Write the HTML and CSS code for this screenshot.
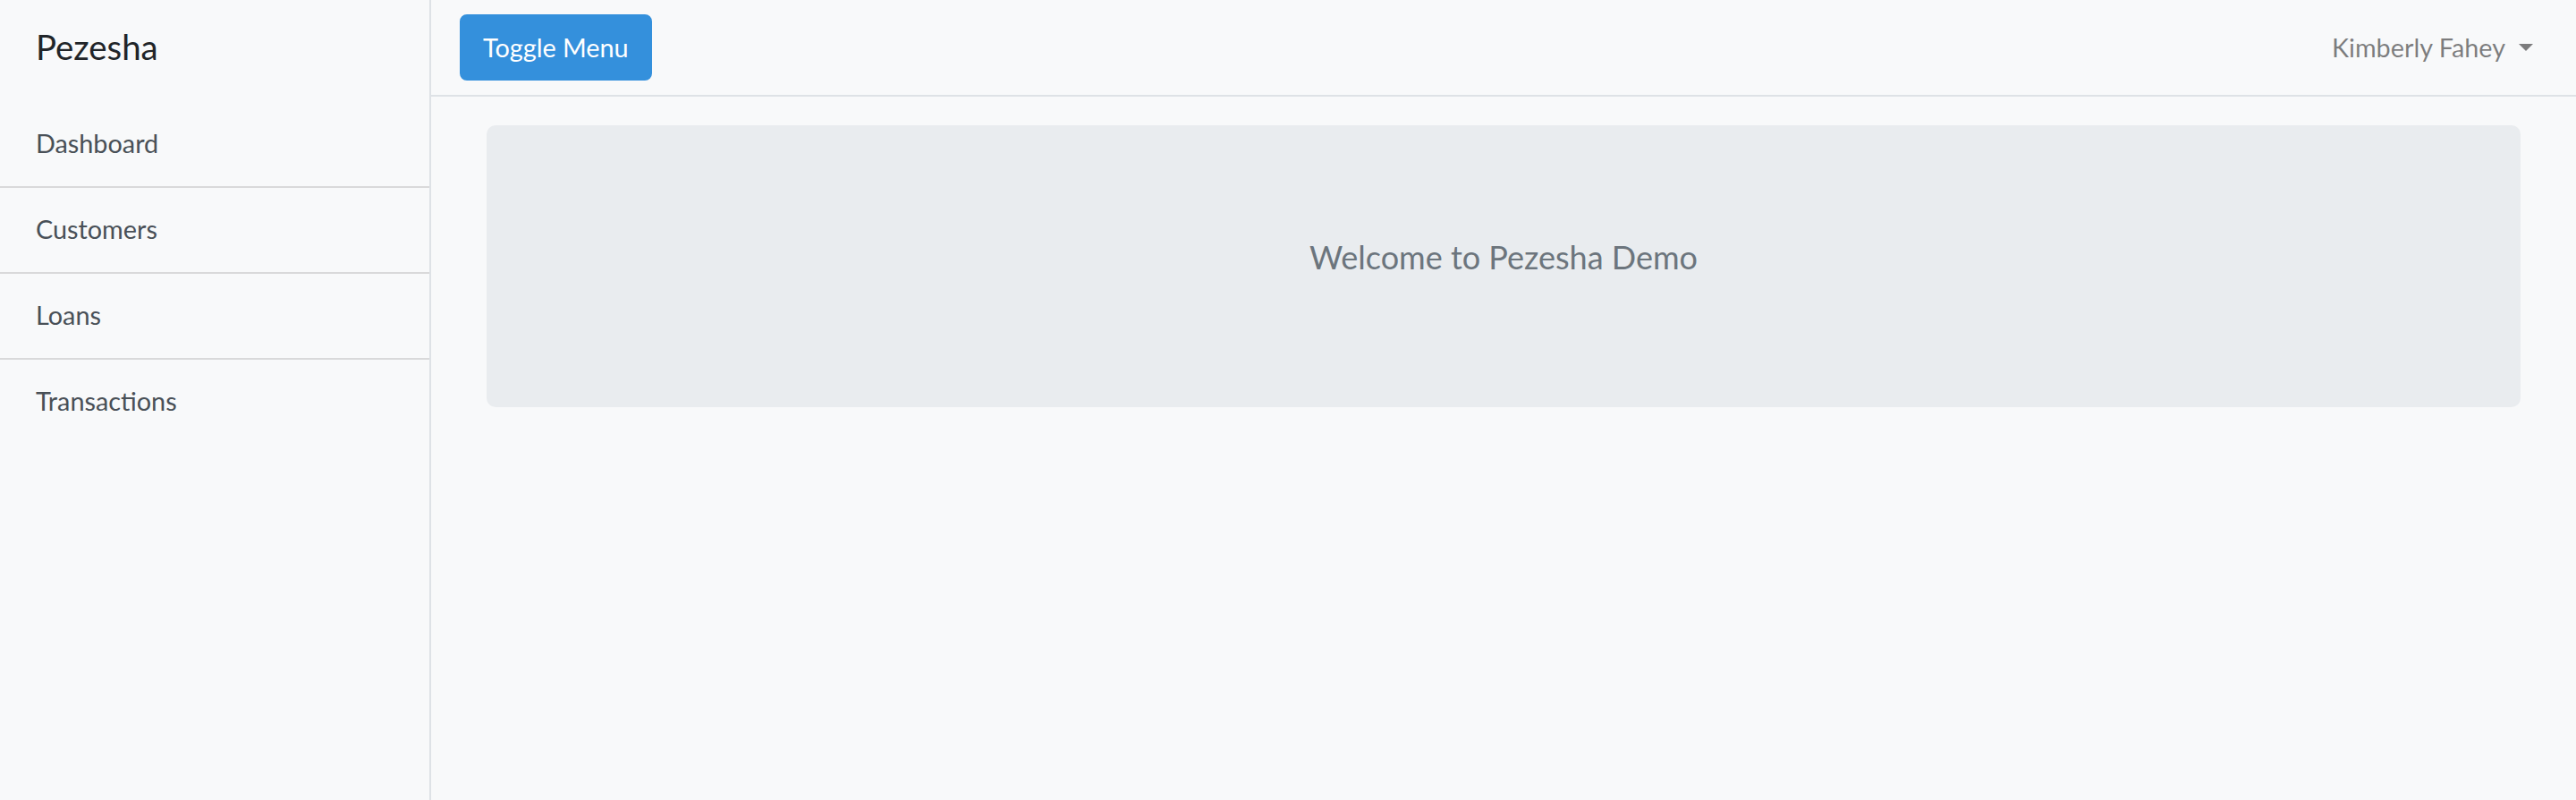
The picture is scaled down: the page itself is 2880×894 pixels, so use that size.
FILE: index.html
```html
<!DOCTYPE html>
<html lang="en">
<head>
<meta charset="utf-8">
<title>Pezesha</title>
<link rel="stylesheet" href="styles.css">
</head>
<body>
<div class="wrapper">
  <aside class="sidebar">
    <div class="sidebar-heading">Pezesha</div>
    <nav class="list-group">
      <a class="list-item" href="#">Dashboard</a>
      <a class="list-item" href="#">Customers</a>
      <a class="list-item" href="#">Loans</a>
      <a class="list-item" href="#">Transactions</a>
    </nav>
  </aside>
  <div class="page">
    <header class="navbar">
      <button class="btn-primary" type="button">Toggle Menu</button>
      <a class="user-toggle" href="#">Kimberly Fahey<span class="caret"></span></a>
    </header>
    <main class="content">
      <section class="jumbotron">
        <p class="lead">Welcome to Pezesha Demo</p>
      </section>
    </main>
  </div>
</div>
</body>
</html>
```
FILE: styles.css
```css
* { box-sizing: border-box; }
html, body {
  margin: 0;
  padding: 0;
  height: 100%;
}
body {
  background: #f8f9fa;
  font-family: "Lato", "Open Sans", "Noto Sans", sans-serif;
  font-size: 28.8px;
  line-height: 1.6;
  color: #212529;
}
.wrapper {
  display: flex;
  min-height: 100vh;
}
.sidebar {
  width: 482px;
  flex: 0 0 482px;
  background: #f8f9fa;
  border-right: 2px solid #dee2e6;
}
.sidebar-heading {
  padding: 22px 40px 31px 40px;
  font-size: 38.4px;
  line-height: 61px;
  color: #212529;
}
.list-group {
  display: flex;
  flex-direction: column;
}
.list-item {
  display: block;
  padding: 23px 40px 25px 40px;
  line-height: 46px;
  color: #495057;
  text-decoration: none;
  border-bottom: 2px solid rgba(0, 0, 0, 0.125);
}
.list-item:last-child {
  border-bottom: 0;
}
.page {
  flex: 1;
  display: flex;
  flex-direction: column;
}
.navbar {
  display: flex;
  align-items: center;
  justify-content: space-between;
  padding: 16px 32px;
  border-bottom: 2px solid #dee2e6;
}
.btn-primary {
  font-family: inherit;
  font-size: 28.8px;
  line-height: 46px;
  padding: 12px 24px;
  color: #fff;
  background: #3490dc;
  border: 2px solid #3490dc;
  border-radius: 8px;
}
.user-toggle {
  display: flex;
  align-items: center;
  padding: 0 16px;
  color: rgba(0, 0, 0, 0.5);
  text-decoration: none;
  line-height: 46px;
}
.caret {
  display: inline-block;
  margin-left: 15px;
  width: 0;
  height: 0;
  border-top: 8.6px solid rgba(0, 0, 0, 0.5);
  border-left: 8.6px solid transparent;
  border-right: 8.6px solid transparent;
}
.content {
  padding: 32px 62px;
}
.jumbotron {
  background: #e9ecef;
  border-radius: 10px;
  padding: 118px 64px 139px 64px;
  text-align: center;
}
.lead {
  margin: 0;
  font-size: 36px;
  line-height: 58px;
  color: #6c757d;
}
```
